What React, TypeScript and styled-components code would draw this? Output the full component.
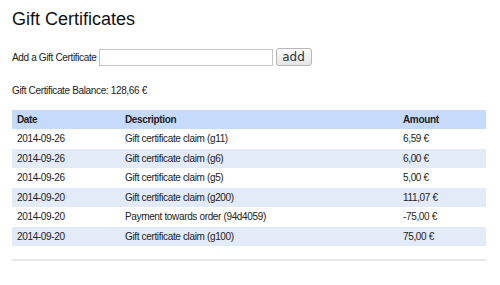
import styled, { createGlobalStyle } from "styled-components";

const GlobalStyle = createGlobalStyle`
  body {
    margin: 0;
    background: #ffffff;
    font-family: "Liberation Sans", Arial, sans-serif;
    color: #222222;
  }
`;

type Entry = {
  date: string;
  description: string;
  amount: string;
};

const entries: Entry[] = [
  { date: "2014-09-26", description: "Gift certificate claim (g11)", amount: "6,59 €" },
  { date: "2014-09-26", description: "Gift certificate claim (g6)", amount: "6,00 €" },
  { date: "2014-09-26", description: "Gift certificate claim (g5)", amount: "5,00 €" },
  { date: "2014-09-20", description: "Gift certificate claim (g200)", amount: "111,07 €" },
  { date: "2014-09-20", description: "Payment towards order (94d4059)", amount: "-75,00 €" },
  { date: "2014-09-20", description: "Gift certificate claim (g100)", amount: "75,00 €" },
];

const Page = styled.div`
  padding: 9px 14px 0 12px;
  font-size: 10px;
  letter-spacing: -0.35px;
`;

const Title = styled.h1`
  margin: 0;
  font-size: 18px;
  font-weight: normal;
  line-height: 20px;
  letter-spacing: 0;
  color: #111111;
`;

const AddForm = styled.form`
  display: flex;
  align-items: center;
  margin-top: 19px;
`;

const AddInput = styled.input`
  box-sizing: border-box;
  width: 174px;
  height: 17px;
  margin: 0 3px 0 2px;
  border: 1px solid #c4c4c4;
  padding: 0 2px;
  font-size: 11px;
`;

const AddButton = styled.button`
  box-sizing: border-box;
  width: 36px;
  height: 18px;
  padding: 0;
  border: 1px solid #b8b8b8;
  border-radius: 3px;
  background: linear-gradient(#fafafa, #e6e6e6);
  font-family: "DejaVu Sans", sans-serif;
  font-size: 12px;
  letter-spacing: 0;
  color: #333333;
`;

const Balance = styled.p`
  margin: 19px 0 0;
`;

const Table = styled.table`
  width: 474px;
  margin-top: 14px;
  border-collapse: collapse;
  font-size: 10px;
`;

const HeadCell = styled.th<{ $width: number }>`
  width: ${(p) => p.$width}px;
  height: 19px;
  padding: 0 5px;
  text-align: left;
  font-weight: bold;
  background: #c6dafb;
`;

const Row = styled.tr<{ $shaded: boolean }>`
  background: ${(p) => (p.$shaded ? "#e3ebf9" : "#ffffff")};
`;

const Cell = styled.td`
  height: 19.5px;
  padding: 0 5px;
`;

const Rule = styled.hr`
  width: 474px;
  margin: 13px 0 0;
  border: none;
  border-top: 2px solid #e8e8e8;
`;

export default function App() {
  return (
    <>
      <GlobalStyle />
      <Page>
        <Title>Gift Certificates</Title>
        <AddForm onSubmit={(e) => e.preventDefault()}>
          <label htmlFor="giftcode">Add a Gift Certificate</label>
          <AddInput id="giftcode" type="text" />
          <AddButton type="submit">add</AddButton>
        </AddForm>
        <Balance>Gift Certificate Balance: 128,66 €</Balance>
        <Table>
          <thead>
            <tr>
              <HeadCell $width={98}>Date</HeadCell>
              <HeadCell $width={268}>Description</HeadCell>
              <HeadCell $width={78}>Amount</HeadCell>
            </tr>
          </thead>
          <tbody>
            {entries.map((entry, i) => (
              <Row key={i} $shaded={i % 2 === 1}>
                <Cell>{entry.date}</Cell>
                <Cell>{entry.description}</Cell>
                <Cell>{entry.amount}</Cell>
              </Row>
            ))}
          </tbody>
        </Table>
        <Rule />
      </Page>
    </>
  );
}
